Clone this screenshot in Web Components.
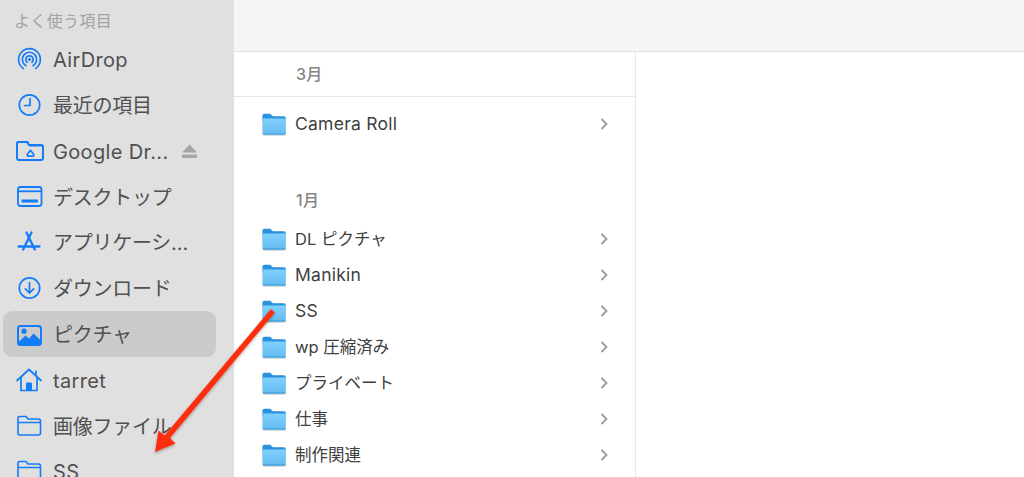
<!DOCTYPE html>
<html lang="ja"><head><meta charset="utf-8"><title>Finder</title>
<style>html,body{margin:0;padding:0;background:#fff;overflow:hidden}body{width:1024px;height:477px;font-family:Inter,"Noto Sans CJK JP",sans-serif}</style>
</head><body>
<finder-window>
  <finder-sidebar slot="side" heading="よく使う項目">
    <side-item icon="airdrop" latin>AirDrop</side-item>
    <side-item icon="clock">最近の項目</side-item>
    <side-item icon="drive" eject latin>Google Dr...</side-item>
    <side-item icon="desktop">デスクトップ</side-item>
    <side-item icon="apps">アプリケーシ…</side-item>
    <side-item icon="download">ダウンロード</side-item>
    <side-item icon="picture" selected>ピクチャ</side-item>
    <side-item icon="home" latin>tarret</side-item>
    <side-item icon="folder">画像ファイル</side-item>
    <side-item icon="folder" latin>SS</side-item>
  </finder-sidebar>
  <finder-column slot="col">
    <col-head class="first">3月</col-head>
    <col-row latin>Camera Roll</col-row>
    <col-head>1月</col-head>
    <col-row>DL ピクチャ</col-row>
    <col-row latin>Manikin</col-row>
    <col-row latin>SS</col-row>
    <col-row>wp 圧縮済み</col-row>
    <col-row>プライベート</col-row>
    <col-row>仕事</col-row>
    <col-row>制作関連</col-row>
  </finder-column>
</finder-window>
<script>
const B='#157cf8';
const ICONS={
airdrop:`<g fill="none" stroke="${B}" stroke-width="1.7" stroke-linecap="round"><path d="M7.2 22.4a10.9 10.9 0 1 1 12.600 0"/><path d="M9.900 19.700a7.200 7.200 0 1 1 7.200 0"/><path d="M11.100 16.300a3.700 3.700 0 1 1 4.800 0"/></g><circle cx="13.500" cy="13.500" r="1.600" fill="${B}"/>`,
clock:`<g fill="none" stroke="${B}" stroke-width="1.700" stroke-linecap="round" stroke-linejoin="round"><circle cx="13.500" cy="13" r="10.200"/><path d="M14 6.500V13.500H8.500"/></g>`,
drive:`<path d="M1 5V20a2 2 0 0 0 2 2h22a2 2 0 0 0 2-2V9a2 2 0 0 0-2-2H13L11 4H2Z" fill="none" stroke="${B}" stroke-width="2"/><path d="M1 4h10l2.500 4.500H27V7H14L12 3H1Z" fill="${B}"/><path d="M14.500 12.500l3 3.500a1.300 1.300 0 0 1-1 2.200h-4a1.300 1.300 0 0 1-1-2.200Z" fill="none" stroke="${B}" stroke-width="1.800"/>`,
desktop:`<g fill="none" stroke="${B}" stroke-width="1.800"><rect x="2" y="3" width="23.500" height="19" rx="2.500"/><path d="M2 7.300H25.500"/></g><rect x="5.500" y="15.500" width="16.500" height="3" fill="${B}"/>`,
apps:`<g fill="none" stroke="${B}" stroke-width="2.300" stroke-linecap="round"><path d="M10.500 3.500L18.800 20.500"/><path d="M15.500 3.500L7.200 20.500"/><path d="M2.500 17.500H23.500"/></g>`,
download:`<g fill="none" stroke="${B}" stroke-width="1.700" stroke-linecap="round" stroke-linejoin="round"><circle cx="13.500" cy="13" r="10.200"/><path d="M13.500 7.500V18M9.300 13.800L13.500 18L17.700 13.800"/></g>`,
picture:`<rect x="2" y="5" width="23" height="19" rx="2.500" fill="none" stroke="${B}" stroke-width="2"/><circle cx="8" cy="10.200" r="2.600" fill="${B}"/><path d="M2.500 21L9.500 14.500L13 17.500L17.500 12.500L24.500 19V23.500H2.500Z" fill="${B}"/>`,
home:`<g fill="none" stroke="${B}" stroke-width="1.700" stroke-linecap="round" stroke-linejoin="round"><path d="M1 13.500L13 2.500L25 13.500"/><path d="M5 10.500V23.500H21V10.500"/><path d="M20 4V7.500"/></g><path d="M10 23.500V16.500a1 1 0 0 1 1-1H15a1 1 0 0 1 1 1V23.500Z" fill="${B}"/>`,
folder:`<path d="M2 6V20a2 2 0 0 0 2 2H22.500a2 2 0 0 0 2-2V8a2 2 0 0 0-2-2H12L10 3.500H3.500A1.500 1.500 0 0 0 2 5ZM2 9.500H24.500" fill="none" stroke="${B}" stroke-width="1.600" stroke-linejoin="round"/>`
};
function def(name,html){customElements.define(name,class extends HTMLElement{connectedCallback(){if(this.shadowRoot)return;const r=this.attachShadow({mode:'open'});r.innerHTML=typeof html==='function'?html(this):html;}});}
const F='Inter,"Noto Sans CJK JP",sans-serif';
def('finder-window',`<style>
:host{display:grid;grid-template-columns:234px 1fr;width:1024px;height:477px;position:relative;overflow:hidden}
.main{display:flex;flex-direction:column;min-width:0}
.bar{height:51px;background:#f6f5f5;border-bottom:1px solid #e2e2e2;flex:none}
.cols{flex:1;display:flex;min-height:0}
.rest{flex:1}
svg.arrow{position:absolute;left:0;top:0;pointer-events:none;overflow:visible}
</style>
<slot name="side"></slot>
<div class="main"><div class="bar"></div><div class="cols"><slot name="col"></slot><div class="rest"></div></div></div>
<svg class="arrow" width="1024" height="477" viewBox="0 0 1024 477"><defs><filter id="s" x="-20%" y="-20%" width="140%" height="140%"><feDropShadow dx="0" dy="1.500" stdDeviation="1.500" flood-color="#000" flood-opacity=".3"/></filter></defs>
<path d="M271 309L275 312.500L170 438L175.500 443.500L155 452L158.500 430.500L164.500 435.500Z" fill="#fb2f0e" filter="url(#s)"/></svg>`);
def('finder-sidebar',h=>`<style>
:host{display:block;background:#e0e0e0;height:477px;overflow:hidden;padding:0 18px 0 3px;box-sizing:border-box}
h2{margin:0;height:36.400px;box-sizing:border-box;padding:12px 0 0 11px;font:400 16px/18px ${F};color:#a3a3a3;letter-spacing:.35px}
</style><h2>${h.getAttribute('heading')}</h2><slot></slot>`);
def('side-item',h=>`<style>
:host{display:flex;align-items:center;height:45.800px;border-radius:9px;padding-left:13px;box-sizing:border-box;color:#505050;font:20px/24px ${F};white-space:nowrap;letter-spacing:-.25px}
:host([latin]){letter-spacing:.35px}
:host([selected]){background:#cbcbcb}
svg.i{width:26px;height:26px;flex:none;margin-right:11px}
.t{display:block;padding-top:2px}
.e{margin-left:12px;width:17px;height:16px;flex:none}
</style><svg class="i" viewBox="0 0 26 26" overflow="visible">${ICONS[h.getAttribute('icon')]}</svg><span class="t"><slot></slot></span>${h.hasAttribute('eject')?'<svg class="e" viewBox="0 0 17 16"><path d="M8.500 1.500L16 9.500H1Z" fill="#a6a6a6"/><rect x="1" y="11.500" width="15" height="3.500" fill="#a6a6a6"/></svg>':''}`);
def('finder-column',`<style>:host{display:block;width:401px;border-right:1px solid #e6e6e6;overflow:hidden;flex:none}</style><slot></slot>`);
def('col-head',h=>{const f=h.classList.contains('first');return `<style>
:host{display:flex;align-items:center;box-sizing:border-box;padding-left:62px;font:500 16px/18px ${F};color:#858585;letter-spacing:.3px;${f?'height:45px;padding-top:0;border-bottom:1px solid #e6e6e6;margin-bottom:9px;':'height:79px;padding-top:37px;'}}
</style><slot></slot>`});
def('col-row',`<style>
:host{display:flex;align-items:center;height:36px;padding-left:27px;box-sizing:border-box;color:#404040;font:16.500px/22px ${F};white-space:nowrap}
:host([latin]){font-size:17.500px;letter-spacing:.25px}
svg.f{width:26px;height:24px;flex:none;margin-right:8px;overflow:visible}
.t{flex:1;padding-bottom:1px}
svg.c{width:10px;height:14px;flex:none;margin-right:26px;margin-bottom:1px}
</style><svg class="f" viewBox="0 0 26 24"><defs><linearGradient id="b" x1="0" y1="0" x2="0" y2="1"><stop offset="0" stop-color="#80d0fb"/><stop offset="1" stop-color="#64bcf2"/></linearGradient><filter id="d" x="-10%" y="-10%" width="120%" height="125%"><feDropShadow dx="0" dy=".6" stdDeviation=".6" flood-color="#000" flood-opacity=".25"/></filter></defs>
<g filter="url(#d)"><path d="M1.500 3.500a1.800 1.800 0 0 1 1.800-1.800h6l2.500 2.500h11a2 2 0 0 1 2 2V10h-23.300Z" fill="#2c92de"/><path d="M1.500 6.500h23.300V21a1.800 1.800 0 0 1-1.800 1.800H3.300a1.800 1.800 0 0 1-1.800-1.800Z" fill="url(#b)"/><path d="M1.500 21h23.300a1.800 1.800 0 0 1-1.800 1.800H3.300a1.800 1.800 0 0 1-1.800-1.800Z" fill="#55aae2"/></g></svg>
<span class="t"><slot></slot></span>
<svg class="c" viewBox="0 0 10 14"><path d="M2.500 2L7.500 7L2.500 12" fill="none" stroke="#9a9a9a" stroke-width="1.800"/></svg>`);
</script>
</body></html>
